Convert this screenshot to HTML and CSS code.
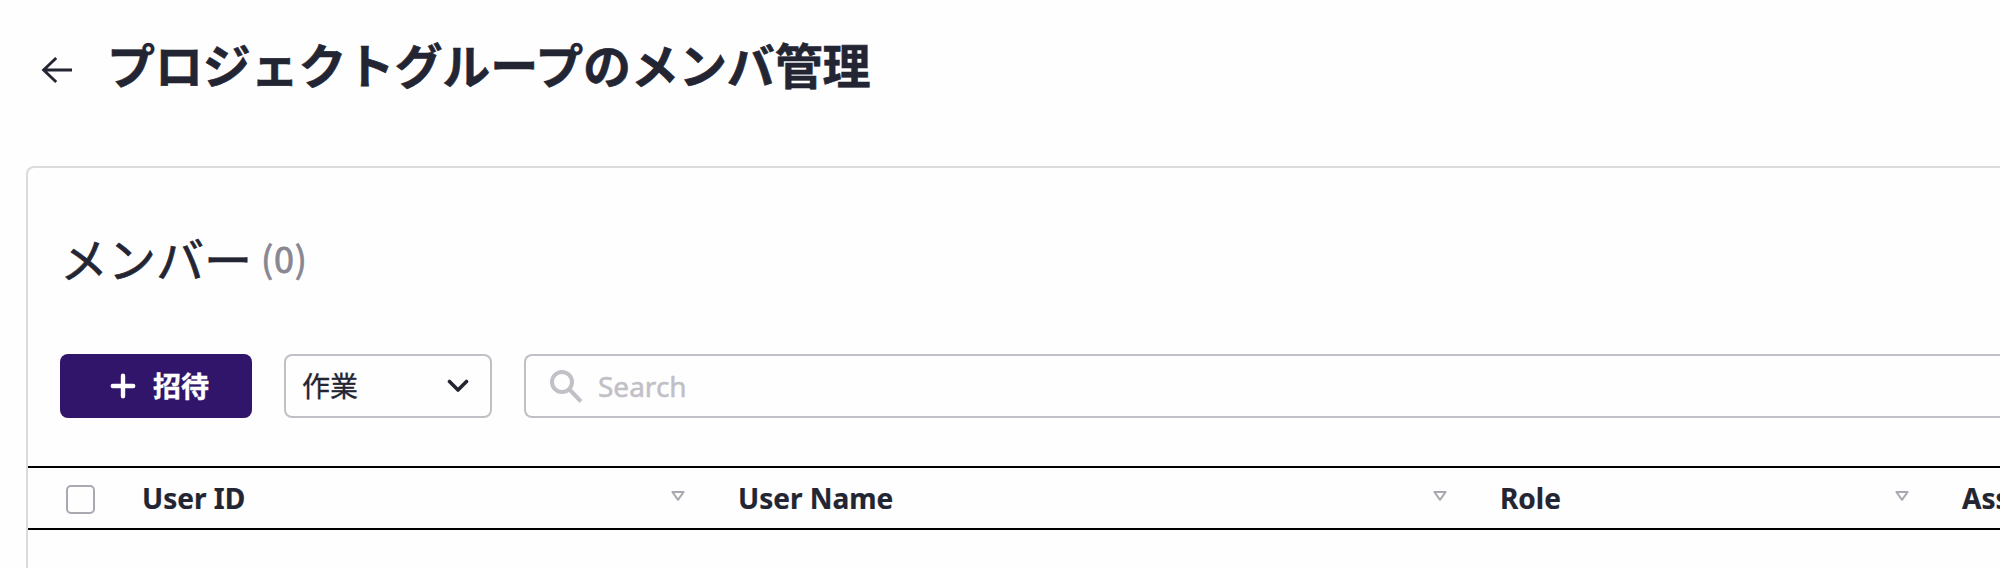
FILE: index.html
```html
<!DOCTYPE html>
<html lang="ja">
<head>
<meta charset="utf-8">
<title>プロジェクトグループのメンバ管理</title>
<link rel="stylesheet" href="styles.css">
</head>
<body>
<header class="page-header">
  <svg class="back-icon" viewBox="0 0 32 28" fill="none" stroke="#232533" stroke-width="2.9"><path d="M31 14H2M15.2 2L2.6 14L15.2 26"/></svg>
  <h1 class="page-title">プロジェクトグループのメンバ管理</h1>
</header>
<main class="panel">
  <div class="section-head">
    <h2 class="section-title">メンバー</h2>
    <span class="count">(0)</span>
  </div>
  <div class="toolbar">
    <button class="invite">
      <svg class="plus-icon" viewBox="0 0 26 26" fill="none" stroke="#fff" stroke-width="4.4" stroke-linecap="round"><path d="M13 2.8V23.2M2.8 13H23.2"/></svg>
      <span class="invite-label">招待</span>
    </button>
    <div class="select">
      <span class="select-label">作業</span>
      <svg class="chevron-icon" viewBox="0 0 22 14" fill="none" stroke="#232533" stroke-width="3.6" stroke-linecap="round" stroke-linejoin="round"><path d="M2.5 2.5L11 11L19.5 2.5"/></svg>
    </div>
    <div class="search">
      <svg class="search-icon" viewBox="0 0 34 34" fill="none" stroke="#c1c0c6" stroke-width="4"><circle cx="13" cy="13" r="10"/><path d="M20.5 20.5L32 32.5"/></svg>
      <input class="search-input" type="text" placeholder="Search">
    </div>
  </div>
  <div class="table-head">
    <span class="check-cell"><span class="checkbox"></span></span>
    <div class="cell">User ID <svg class="sort" viewBox="0 0 14 10"><path d="M1.4 1H12.6L7 8.8Z"/></svg></div>
    <div class="cell">User Name <svg class="sort" viewBox="0 0 14 10"><path d="M1.4 1H12.6L7 8.8Z"/></svg></div>
    <div class="cell">Role <svg class="sort" viewBox="0 0 14 10"><path d="M1.4 1H12.6L7 8.8Z"/></svg></div>
    <div class="cell">Assigned</div>
  </div>
</main>
</body>
</html>
```
FILE: styles.css
```css
* { box-sizing: border-box; }
body {
  margin: 0;
  height: 568px;
  overflow: hidden;
  background: #fefefe;
  color: #232533;
  font-family: "Noto Sans", "Noto Sans CJK JP", sans-serif;
}
svg { display: block; flex: none; }
.page-header {
  display: flex;
  align-items: center;
  height: 140px;
  padding-left: 41px;
}
.back-icon { width: 32px; height: 28px; }
.page-title {
  margin: -14px 0 0 34px;
  font: 700 48px/72px "Noto Sans CJK JP", sans-serif;
  letter-spacing: -0.1px;
  -webkit-text-stroke: 0.6px currentColor;
  white-space: nowrap;
}
.panel {
  height: 402px;
  margin: 26px 0 0 26px;
  overflow: hidden;
  border: 2px solid #dcdcdc;
  border-width: 2px 0 0 2px;
  border-radius: 8px 0 0 0;
}
.section-head {
  display: flex;
  align-items: center;
  height: 72px;
  margin: 53px 0 0 32px;
}
.section-title {
  margin: 0;
  font: 400 48px/72px "Noto Sans CJK JP", sans-serif;
  -webkit-text-stroke: 0.7px currentColor;
}
.count {
  margin-left: 9px;
  color: #898792;
  font: 400 36px/54px "Noto Sans CJK JP", sans-serif;
  letter-spacing: 0.8px;
  -webkit-text-stroke: 0.8px currentColor;
}
.toolbar {
  display: flex;
  gap: 32px;
  margin: 61px 0 0 32px;
}
.invite {
  display: flex;
  align-items: center;
  width: 192px;
  height: 64px;
  padding: 0 0 0 50px;
  border: 0;
  border-radius: 8px;
  background: #30156b;
  color: #fff;
}
.plus-icon { width: 26px; height: 26px; }
.invite-label {
  margin: -2px 0 0 17px;
  font: 700 28px/42px "Noto Sans CJK JP", sans-serif;
  -webkit-text-stroke: 0.4px currentColor;
}
.select {
  display: flex;
  align-items: center;
  justify-content: space-between;
  width: 208px;
  height: 64px;
  padding: 0 21px 0 16px;
  border: 2px solid #c1c0c6;
  border-radius: 8px;
}
.select-label {
  margin-top: -3px;
  font: 400 28px/42px "Noto Sans CJK JP", sans-serif;
  -webkit-text-stroke: 0.3px currentColor;
}
.chevron-icon { width: 22px; height: 14px; }
.search {
  display: flex;
  flex: 1;
  align-items: center;
  height: 64px;
  padding-left: 23px;
  border: 2px solid #c1c0c6;
  border-right: 0;
  border-radius: 8px 0 0 8px;
}
.search-icon { width: 34px; height: 34px; }
.search-input {
  margin-left: 15px;
  padding: 0;
  border: 0;
  outline: 0;
  background: none;
  font: 400 28px/38px "Noto Sans", sans-serif;
}
.search-input::placeholder {
  color: #c1c0c6;
  -webkit-text-stroke: 0.5px #c1c0c6;
}
.table-head {
  display: grid;
  grid-template-columns: 114px 596px 762px 462px 1fr;
  height: 64px;
  margin-top: 48px;
  border: 2px solid #000;
  border-width: 2px 0;
}
.check-cell { display: flex; align-items: center; padding: 2px 0 0 38px; }
.checkbox {
  width: 29px;
  height: 29px;
  border: 2px solid #aaa8b0;
  border-radius: 5px;
}
.cell {
  display: flex;
  align-items: center;
  justify-content: space-between;
  min-width: 0;
  padding-right: 53px;
  font: 700 28px/38px "Noto Sans", sans-serif;
  -webkit-text-stroke: 0.2px currentColor;
}
.cell:last-child { padding-right: 0; overflow: hidden; }
.sort {
  width: 14px;
  height: 10px;
  margin-top: -5px;
  fill: none;
  stroke: #aaa8b0;
  stroke-width: 2;
  stroke-linejoin: round;
}
```
